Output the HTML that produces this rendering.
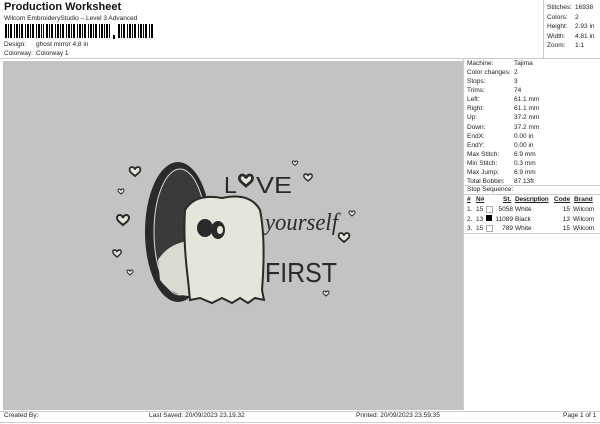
<!DOCTYPE html>
<html><head><style>
body{margin:0;width:600px;height:424px;background:#fff;font-family:"Liberation Sans",sans-serif;color:#222;position:relative;overflow:hidden;font-size:6.5px}
.a{position:absolute;white-space:nowrap}
.r{position:absolute;left:467px;white-space:nowrap}
.v{position:absolute;left:514px;white-space:nowrap}
</style></head><body>
<div class="a" style="left:4px;top:1px;font-size:11px;font-weight:bold;color:#111">Production Worksheet</div>
<div class="a" style="left:4px;top:15px;font-size:6.5px">Wilcom EmbroideryStudio – Level 3 Advanced</div>
<svg class="a" style="left:5px;top:24px" width="150" height="16">
<g fill="#000">
<rect x="0" y="0" width="2" height="14"/><rect x="3" y="0" width="1" height="14"/><rect x="5" y="0" width="2" height="14"/><rect x="9" y="0" width="1" height="14"/><rect x="11" y="0" width="2" height="14"/><rect x="14" y="0" width="1" height="14"/><rect x="16" y="0" width="2" height="14"/><rect x="20" y="0" width="1" height="14"/><rect x="22" y="0" width="2" height="14"/><rect x="25" y="0" width="1" height="14"/><rect x="27" y="0" width="2" height="14"/><rect x="31" y="0" width="1" height="14"/><rect x="33" y="0" width="2" height="14"/><rect x="36" y="0" width="1" height="14"/><rect x="38" y="0" width="1" height="14"/><rect x="41" y="0" width="2" height="14"/><rect x="44" y="0" width="1" height="14"/><rect x="46" y="0" width="2" height="14"/><rect x="50" y="0" width="1" height="14"/><rect x="52" y="0" width="2" height="14"/><rect x="55" y="0" width="1" height="14"/><rect x="57" y="0" width="2" height="14"/><rect x="61" y="0" width="1" height="14"/><rect x="63" y="0" width="2" height="14"/><rect x="66" y="0" width="1" height="14"/><rect x="68" y="0" width="2" height="14"/><rect x="72" y="0" width="1" height="14"/><rect x="74" y="0" width="2" height="14"/><rect x="77" y="0" width="1" height="14"/><rect x="79" y="0" width="2" height="14"/><rect x="83" y="0" width="1" height="14"/><rect x="85" y="0" width="2" height="14"/><rect x="88" y="0" width="1" height="14"/><rect x="90" y="0" width="2" height="14"/><rect x="94" y="0" width="1" height="14"/><rect x="96" y="0" width="2" height="14"/><rect x="99" y="0" width="1" height="14"/><rect x="101" y="0" width="2" height="14"/><rect x="104" y="0" width="1" height="14"/>
<rect x="108" y="11" width="2" height="4"/>
<rect x="113" y="0" width="2" height="14"/><rect x="116" y="0" width="1" height="14"/><rect x="118" y="0" width="2" height="14"/><rect x="122" y="0" width="1" height="14"/><rect x="124" y="0" width="2" height="14"/><rect x="127" y="0" width="1" height="14"/><rect x="129" y="0" width="2" height="14"/><rect x="133" y="0" width="1" height="14"/><rect x="135" y="0" width="2" height="14"/><rect x="138" y="0" width="1" height="14"/><rect x="140" y="0" width="2" height="14"/><rect x="144" y="0" width="1" height="14"/><rect x="146" y="0" width="2" height="14"/>
</g></svg>
<div class="a" style="left:4px;top:41px">Design:</div><div class="a" style="left:36px;top:41px">ghost mirror 4,8 in</div>
<div class="a" style="left:4px;top:50px">Colorway:</div><div class="a" style="left:36px;top:50px">Colorway 1</div>
<div class="a" style="left:0;top:58px;width:600px;border-top:1px solid #ccc"></div>
<div class="a" style="left:543px;top:0;height:58px;border-left:1px solid #ccc"></div>
<div class="a" style="left:547px;top:3px;line-height:9.5px">Stitches:<br>Colors:<br>Height:<br>Width:<br>Zoom:</div>
<div class="a" style="left:575px;top:3px;line-height:9.5px">16938<br>2<br>2.93 in<br>4.81 in<br>1:1</div>
<div class="a" style="left:3px;top:61px;width:460px;height:349px;background:#c3c3c3"></div>
<div class="a" style="left:463px;top:58px;height:352px;border-left:1px solid #ccc"></div>
<div class="r" style="top:59px;line-height:9.08px">Machine:<br>Color changes:<br>Stops:<br>Trims:<br>Left:<br>Right:<br>Up:<br>Down:<br>EndX:<br>EndY:<br>Max Stitch:<br>Min Stitch:<br>Max Jump:<br>Total Bobbin:</div>
<div class="v" style="top:59px;line-height:9.08px">Tajima<br>2<br>3<br>74<br>61.1 mm<br>61.1 mm<br>37.2 mm<br>37.2 mm<br>0.00 in<br>0.00 in<br>6.9 mm<br>0.3 mm<br>6.9 mm<br>87.13ft</div>
<div class="a" style="left:464px;top:185px;width:136px;border-top:1px solid #ccc"></div>
<div class="r" style="top:186px">Stop Sequence:</div>
<div class="a" style="left:464px;top:194px;width:136px;border-top:1px solid #ccc"></div>
<div class="a" style="left:467px;top:196px;font-weight:bold;text-decoration:underline">#</div>
<div class="a" style="left:476px;top:196px;font-weight:bold;text-decoration:underline">N#</div>
<div class="a" style="left:503px;top:196px;font-weight:bold;text-decoration:underline">St.</div>
<div class="a" style="left:515px;top:196px;font-weight:bold;text-decoration:underline;letter-spacing:-0.2px">Description</div>
<div class="a" style="left:554px;top:196px;font-weight:bold;text-decoration:underline">Code</div>
<div class="a" style="left:574px;top:196px;font-weight:bold;text-decoration:underline">Brand</div>
<div class="a" style="left:467px;top:205px;line-height:9.5px">1.&nbsp; 15<br>2.&nbsp; 13<br>3.&nbsp; 15</div>
<div class="a" style="left:486px;top:206px;width:5px;height:5px;border:1px solid #aaa;background:#fff"></div>
<div class="a" style="left:486px;top:215px;width:6px;height:6px;background:#000"></div>
<div class="a" style="left:486px;top:225px;width:5px;height:5px;border:1px solid #aaa;background:#fff"></div>
<div class="a" style="left:492px;top:205px;width:21px;text-align:right;line-height:9.5px">5058<br>11089<br>789</div>
<div class="a" style="left:515px;top:205px;line-height:9.5px">White<br>Black<br>White</div>
<div class="a" style="left:555px;top:205px;width:15px;text-align:right;line-height:9.5px">15<br>13<br>15</div>
<div class="a" style="left:573px;top:205px;line-height:9.5px">Wilcom<br>Wilcom<br>Wilcom</div>
<div class="a" style="left:464px;top:233px;width:136px;border-top:1px solid #ccc"></div>
<div class="a" style="left:0;top:411px;width:600px;border-top:1px solid #ccc"></div>
<div class="a" style="left:0;top:422px;width:600px;border-top:1px solid #ccc"></div>
<div class="a" style="left:4px;top:412px">Created By:</div>
<div class="a" style="left:149px;top:412px">Last Saved: 20/09/2023 23.19.32</div>
<div class="a" style="left:356px;top:412px">Printed: 20/09/2023 23.59.35</div>
<div class="a" style="left:563px;top:412px">Page 1 of 1</div>
<svg class="a" style="left:0;top:0" width="463" height="410">
<defs><path id="h" d="M0,3 C-1,-1 -6,-1 -6,3 C-6,6 -2,8 0,10 C2,8 6,6 6,3 C6,-1 1,-1 0,3Z"/></defs>
<g fill="#e4e6dc" stroke="#2a2a2a" stroke-width="2">
<use href="#h" transform="translate(135,167) scale(0.9)"/>
<use href="#h" transform="translate(121,189) scale(0.5)"/>
<use href="#h" transform="translate(123,215) scale(1)"/>
<use href="#h" transform="translate(117,250) scale(0.7)"/>
<use href="#h" transform="translate(130,270) scale(0.5)"/>
<use href="#h" transform="translate(295,161) scale(0.45)"/>
<use href="#h" transform="translate(308,174) scale(0.7)"/>
<use href="#h" transform="translate(352,211) scale(0.5)"/>
<use href="#h" transform="translate(344,233) scale(0.9)"/>
<use href="#h" transform="translate(326,291) scale(0.5)"/>
</g>
<ellipse cx="178" cy="232" rx="33" ry="70" fill="#2a2a2a"/>
<ellipse cx="180" cy="232" rx="26" ry="63" fill="#3a3a3a" stroke="#ddd" stroke-width="1"/>
<path d="M158,260 Q170,240 200,240 L200,295 Q175,300 160,280Z" fill="#d8dbd0"/>
<path d="M185,210 Q195,193 222,198 Q250,192 260,210 Q266,240 262,290 L264,300 L255,298 L248,303 L240,298 L232,303 L222,298 L212,303 L200,298 L190,300 L188,280 Q183,240 185,210Z" fill="#e4e6dc" stroke="#2a2a2a" stroke-width="2"/>
<ellipse cx="205" cy="228" rx="8" ry="9" fill="#2a2a2a"/>
<ellipse cx="218" cy="230" rx="7" ry="9" fill="#2a2a2a"/>
<ellipse cx="220" cy="230" rx="3" ry="4" fill="#e4e6dc"/>
<text x="224" y="193" font-family="Liberation Sans" font-size="23" fill="#2a2a2a">L</text>
<use href="#h" transform="translate(246,175) scale(1.1)" fill="#e4e6dc" stroke="#2a2a2a" stroke-width="2.5"/>
<text x="256" y="193" font-family="Liberation Sans" font-size="23" fill="#2a2a2a" textLength="36" lengthAdjust="spacingAndGlyphs">VE</text>
<text x="265" y="230" font-family="Liberation Serif" font-style="italic" font-size="24" fill="#2a2a2a" textLength="73" lengthAdjust="spacingAndGlyphs">yourself</text>
<text x="265" y="282" font-family="Liberation Sans" font-size="28" fill="#2a2a2a" textLength="72" lengthAdjust="spacingAndGlyphs">FIRST</text>
</svg>
</body></html>
